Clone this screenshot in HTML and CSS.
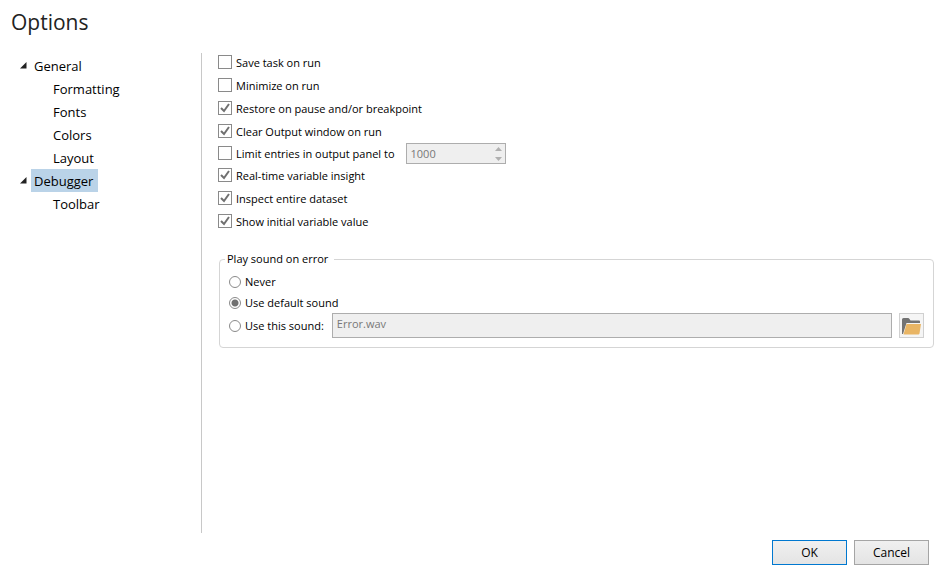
FILE: index.html
```html
<!DOCTYPE html>
<html lang="en">
<head>
<meta charset="utf-8">
<title>Options</title>
<link rel="stylesheet" href="styles.css">
</head>
<body>
<form class="dialog">
  <h1 class="title">Options</h1>
  <div class="main">
    <nav class="tree" aria-label="Sections">
      <ul>
        <li>
          <div class="node"><svg class="arrow" viewBox="0 0 7 7" aria-hidden="true"><path d="M6.5 0V6.5H0z"/></svg><a href="#general">General</a></div>
          <ul class="children">
            <li><a href="#formatting">Formatting</a></li>
            <li><a href="#fonts">Fonts</a></li>
            <li><a href="#colors">Colors</a></li>
            <li><a href="#layout">Layout</a></li>
          </ul>
        </li>
        <li>
          <div class="node"><svg class="arrow" viewBox="0 0 7 7" aria-hidden="true"><path d="M6.5 0V6.5H0z"/></svg><a class="selected" href="#debugger" aria-current="page">Debugger</a></div>
          <ul class="children">
            <li><a href="#toolbar">Toolbar</a></li>
          </ul>
        </li>
      </ul>
    </nav>
    <section class="panel">
      <label class="row"><input type="checkbox">Save task on run</label>
      <label class="row"><input type="checkbox">Minimize on run</label>
      <label class="row"><input type="checkbox" checked>Restore on pause and/or breakpoint</label>
      <label class="row"><input type="checkbox" checked>Clear Output window on run</label>
      <div class="limit">
        <label class="row"><input type="checkbox">Limit entries in output panel to</label>
        <div class="spinner">
          <input type="text" inputmode="numeric" value="1000" aria-label="Maximum entries" disabled>
          <svg viewBox="0 0 7 14" aria-hidden="true"><path d="M0 4L3.5 0L7 4zM0 10H7L3.5 14z"/></svg>
        </div>
      </div>
      <label class="row"><input type="checkbox" checked>Real-time variable insight</label>
      <label class="row"><input type="checkbox" checked>Inspect entire dataset</label>
      <label class="row"><input type="checkbox" checked>Show initial variable value</label>
      <fieldset class="group">
        <legend>Play sound on error</legend>
        <label class="choice"><input type="radio" name="sound">Never</label>
        <label class="choice"><input type="radio" name="sound" checked>Use default sound</label>
        <div class="custom">
          <label class="choice"><input type="radio" name="sound">Use this sound:</label>
          <input class="file" type="text" value="Error.wav" aria-label="Sound file" disabled>
          <button class="browse" type="button" aria-label="Browse">
            <svg viewBox="0 0 19 17" aria-hidden="true"><path fill="#737373" d="M0 16V1.500Q0 0 1.500 0H6Q7 0 7.500 1L8.500 2.500H17Q18 2.500 18 3.500V5H4.500L1 16z"/><path fill="#e9b564" d="M4.500 6H19L17.500 15.500Q17.300 16.500 16.300 16.500H1.500z"/></svg>
          </button>
        </div>
      </fieldset>
    </section>
  </div>
  <footer class="actions">
    <button class="primary" type="submit">OK</button>
    <button type="button">Cancel</button>
  </footer>
</form>
</body>
</html>
```
FILE: styles.css
```css
* { box-sizing: border-box; }

body {
  margin: 0;
  background: #fff;
  color: #000;
  font: 11px/16px "Open Sans", "Noto Sans", sans-serif;
}

input, button { font: inherit; color: inherit; }

.dialog {
  display: flex;
  flex-direction: column;
  min-height: 100vh;
  padding: 6px 16px 13px 11px;
}

.title {
  margin: 0 0 15px;
  font-size: 21px;
  line-height: 32px;
  font-weight: 400;
  color: #222;
}

.main { display: flex; flex: 1; }

.tree {
  flex: none;
  width: 191px;
  padding-top: 1px;
  border-right: 1px solid #c8c8c8;
  font-size: 13px;
  line-height: 22px;
}

.tree ul { margin: 0; padding: 0; list-style: none; }
.tree .children { padding-left: 39px; }
.tree li a { display: block; width: fit-content; padding: 1px 5px 0 3px; color: inherit; text-decoration: none; }
.tree .selected { background: #bad3e8; }
.node { display: flex; align-items: center; gap: 4px; padding-left: 9px; }
.arrow { width: 7px; height: 7px; fill: #222; }

.panel { flex: 1; min-width: 0; margin-top: -2px; padding-left: 16px; }

.row, .choice { display: flex; align-items: center; gap: 4px; width: fit-content; height: 23px; }

input[type="checkbox"], input[type="radio"] {
  appearance: none;
  flex: none;
  width: 14px;
  height: 14px;
  margin: 0;
  border: 1px solid #8a8a8a;
  background: #fff;
}

.row input[type="checkbox"] { margin-bottom: 1px; }

input[type="checkbox"]:checked {
  background: #fff url("data:image/svg+xml,%3Csvg xmlns='http://www.w3.org/2000/svg' viewBox='0 0 12 12'%3E%3Cpath d='M2 6L5 9L10 2' fill='none' stroke='%23707070' stroke-width='2'/%3E%3C/svg%3E") center / 12px 12px;
}

input[type="radio"] { width: 12px; height: 12px; border-radius: 50%; }
input[type="radio"]:checked { background: radial-gradient(circle, #707070 3px, #fff 4px); }

.limit { display: flex; gap: 11px; height: 21px; }
.limit .row { height: 21px; }

.spinner {
  display: flex;
  align-items: center;
  width: 100px;
  padding: 0 3px 0 4px;
  border: 1px solid #adadad;
  background: #efefef;
  color: #787878;
}

.spinner input { flex: 1; min-width: 0; padding: 0; border: 0; background: none; }
.spinner svg { width: 7px; height: 14px; fill: #b0b0b0; }

.group {
  min-width: 0;
  margin: 18px 0 0 1px;
  padding: 4px 9px 9px;
  border: 1px solid #d5d5d5;
  border-radius: 4px;
}

.group legend { margin-left: -4px; padding: 0 6px 0 2px; }
.choice { height: 21px; }
.custom { display: flex; height: 25px; }
.custom .choice { height: 25px; margin-right: 8px; }

.file {
  flex: 1;
  min-width: 0;
  padding: 0 4px 3px;
  border: 1px solid #adadad;
  background: #efefef;
  color: #787878;
}

.browse {
  display: grid;
  place-items: center;
  width: 25px;
  margin-left: 7px;
  padding: 2px 0 0;
  border: 1px solid #d0d0d0;
  background: #f5f5f5;
}

.browse svg { width: 19px; height: 17px; }

.actions { display: flex; justify-content: flex-end; gap: 7px; margin: 7px 5px 0 0; }

.actions button {
  width: 75px;
  height: 25px;
  padding: 0;
  border: 1px solid #a5a5a5;
  background: linear-gradient(#f0f0f0, #e4e4e4);
  font-size: 12px;
}

.actions .primary { border-color: #0078d0; }
```
